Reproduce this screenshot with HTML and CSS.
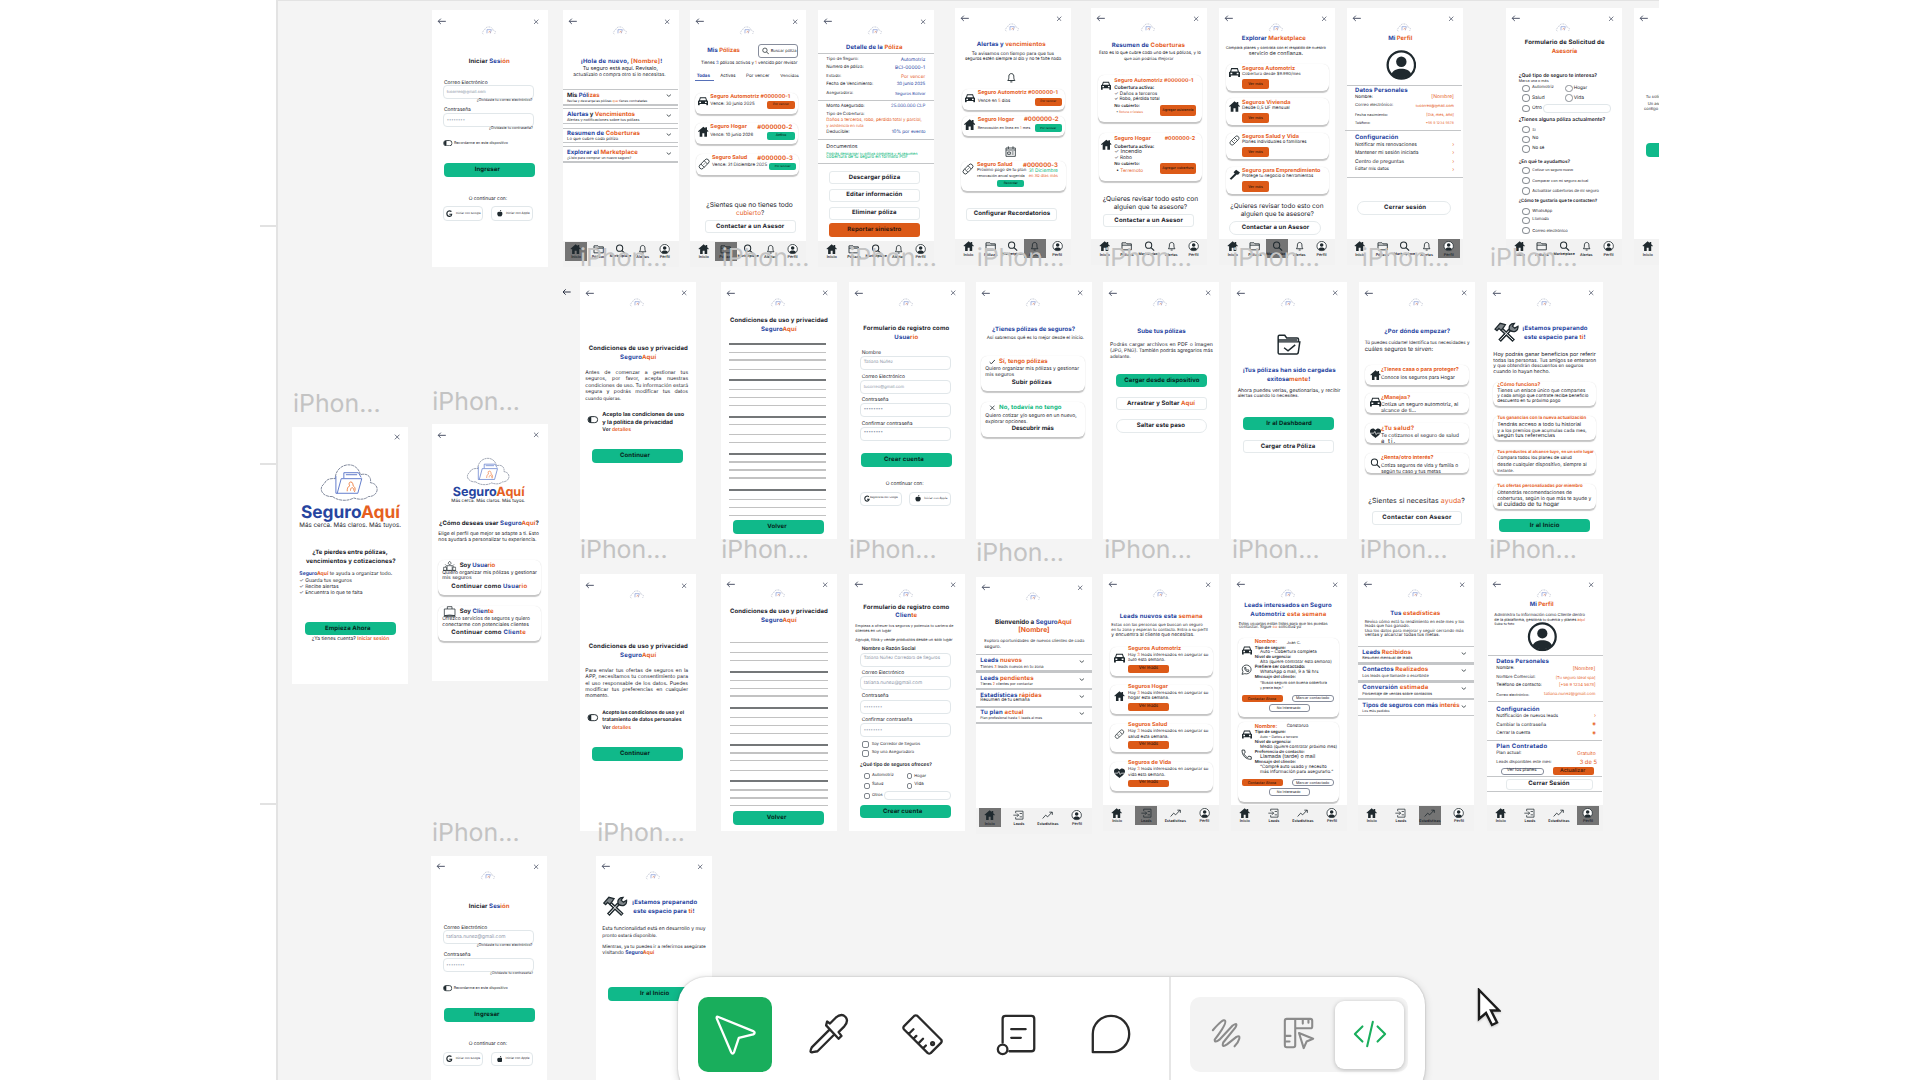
FILE: index.html
```html
<!DOCTYPE html>
<html lang="es">
<head>
<meta charset="utf-8">
<title>SeguroAquí – tablero</title>
<link rel="stylesheet" href="styles.css">
</head>
<body>
<svg class="sprite" aria-hidden="true">
  <symbol id="arrow" viewBox="0 0 27 20"><path d="M26 10H3M11 2 3 10l8 8" fill="none" stroke="currentColor" stroke-width="3"/></symbol>
  <symbol id="close" viewBox="0 0 18 18"><path d="M2 2l14 14M16 2 2 16" fill="none" stroke="currentColor" stroke-width="2.4"/></symbol>
  <symbol id="logo" viewBox="-4 0 184 114"><path d="M40 100C10 102-6 76 16 60c4-12 18-16 32-14C48 0 112-14 124 34c20-6 34 6 30 24 30 4 26 42-6 42-14 12-34 8-44 4-20 12-50 8-64-4Z" fill="none" stroke="#535e78" stroke-width="2.2" stroke-dasharray="9 2"/><path d="M50 38v52h66l12-44H66L54 90M74 44V28h44l8 14M80 34h34" fill="none" stroke="#4a69c4" stroke-width="2.6"/><path d="M84 84c0-16 8-16 8-16s-6-10 2-12 8 12 8 12 10 4 4 18M94 82c0-12 10-12 10 0" fill="none" stroke="#ec7433" stroke-width="2.6"/></symbol>
  <symbol id="mini" viewBox="0 0 48 28"><path d="M6 24C0 21 3 15 9 14 11 5 18 2 23 3c7-1 11 4 11 9 8 0 11 8 5 12" fill="none" stroke="#9aa3ba" stroke-width="1.6" stroke-dasharray="5 3"/><path d="M17 22V11h13l-3 11" fill="none" stroke="#7389cf" stroke-width="1.8"/><path d="M22 20l3-5 2 5" fill="none" stroke="#f0a27c" stroke-width="2"/></symbol>
  <symbol id="car" viewBox="0 0 30 26"><path fill-rule="evenodd" d="M6 1h18l3 9 3 2v13h-5v-4H5v4H0V12l3-2zM8 4 6 10h18l-2-6zM4 14v4h5v-4zm17 0v4h5v-4z" fill="currentColor"/></symbol>
  <symbol id="house" viewBox="0 0 32 32"><path d="M16 1 0 15l2 2 3-2v16h8V21h6v10h8V15l3 2 2-2-5-5V3h-5v3z" fill="currentColor"/></symbol>
  <symbol id="bandage" viewBox="0 0 36 36"><g transform="rotate(-45 18 18)" fill="none" stroke="currentColor" stroke-width="2.4"><rect x="0" y="11" width="36" height="14" rx="7"/><path d="M11 11v14M25 11v14M16 18h4"/></g></symbol>
  <symbol id="hammer" viewBox="0 0 34 32"><path d="M2 29 18 13l-4-4 8-8 12 9-6 7-4-1L7 32z" fill="currentColor"/></symbol>
  <symbol id="heart" viewBox="0 0 32 28"><path d="M16 28C4 20 0 14 0 8 0 0 12-3 16 5 20-3 32 0 32 8c0 6-4 12-16 20z" fill="currentColor"/><path d="M3 14h8l3-5 4 9 3-4h8" fill="none" stroke="#fff" stroke-width="2"/></symbol>
  <symbol id="search" viewBox="0 0 30 30"><circle cx="12" cy="12" r="9" fill="none" stroke="currentColor" stroke-width="3"/><path d="m19 19 9 9" stroke="currentColor" stroke-width="3.4"/></symbol>
  <symbol id="bell" viewBox="0 0 30 32"><path d="M5 24c3-4 3-6 3-12 0-10 14-10 14 0 0 6 0 8 3 12zM12 28h6" fill="none" stroke="currentColor" stroke-width="2.6"/></symbol>
  <symbol id="calendar" viewBox="0 0 34 34"><path d="M3 6h28v25H3zM3 12h28M10 1v8M24 1v8M8 18h8v7H8zM20 18h6M20 24h6" fill="none" stroke="currentColor" stroke-width="2.4"/></symbol>
  <symbol id="policy" viewBox="0 0 34 28"><path d="M3 4h12l3 3h13v18H3zM3 11h28" fill="none" stroke="currentColor" stroke-width="2.6"/></symbol>
  <symbol id="user" viewBox="0 0 92 92"><circle cx="46" cy="46" r="42" fill="#fff" stroke="currentColor" stroke-width="7"/><circle cx="46" cy="36" r="16" fill="currentColor"/><path d="M16 74c6-22 54-22 60 0-16 16-44 16-60 0z" fill="currentColor"/></symbol>
  <symbol id="folder" viewBox="0 0 76 64"><path d="M6 58V8q0-4 4-4h16l6 8h32q4 0 4 4v8M6 24h66l-5 34q-1 3-4 3H10q-4 0-4-4zM6 18h58M24 42l12 9 22-18" fill="none" stroke="currentColor" stroke-width="4.5"/></symbol>
  <symbol id="tools" viewBox="0 0 76 64"><path d="M16 58 48 24M60 58 22 22" stroke="currentColor" stroke-width="11"/><path d="m18 56 28-30M58 56 24 24" stroke="#fff" stroke-width="3"/><path d="M2 22 18 4l16 4-5 8-8 10-7-6-6 7zM48 26c-6-12 2-22 14-22l-6 9 7 6 10-6c2 14-12 22-25 13z" fill="#7d8488" stroke="currentColor" stroke-width="4"/></symbol>
  <symbol id="google" viewBox="0 0 22 24"><path d="M18 5C10-1 2 5 3 13c1 10 15 11 16 1h-8" fill="none" stroke="currentColor" stroke-width="4"/></symbol>
  <symbol id="apple" viewBox="0 0 20 24"><path d="M10 7c10-4 12 6 8 12-3 6-5 4-8 4s-5 2-8-4C-1 13 1 4 10 7zM10 5c0-3 2-5 5-5 0 3-2 5-5 5z" fill="currentColor"/></symbol>
  <symbol id="trend" viewBox="0 0 34 26"><path d="M2 23 11 13l6 5L30 4M22 4h9v8" fill="none" stroke="currentColor" stroke-width="2.4"/></symbol>
  <symbol id="leads" viewBox="0 0 34 30"><path d="M8 9V3h22v24H8v-6M1 15h16M12 10l5 5-5 5M20 10h7M20 20h7" fill="none" stroke="currentColor" stroke-width="2.2"/></symbol>
  <symbol id="whatsapp" viewBox="0 0 34 34"><path d="m3 31 3-8C-2 8 13-2 25 6c12 10 2 27-14 23zM11 11c0 8 5 12 12 12l1-4-4-2-2 2-4-4 1-3-2-3z" fill="none" stroke="currentColor" stroke-width="2.4"/></symbol>
  <symbol id="phone" viewBox="0 0 32 32"><path d="M3 3h7l2 7-4 3c2 5 6 9 11 11l3-4 7 2v7C14 30 2 18 3 3z" fill="none" stroke="currentColor" stroke-width="2.4"/></symbol>
  <symbol id="chevron" viewBox="0 0 18 10"><path d="m2 2 7 6 7-6" fill="none" stroke="currentColor" stroke-width="2.6"/></symbol>
  <symbol id="toggle" viewBox="0 0 34 24"><rect x="2" y="2" width="30" height="19" rx="9" fill="none" stroke="currentColor" stroke-width="3"/><path d="M12 3v17H8Q3 18 3 11t6-8z" fill="currentColor"/></symbol>
  <symbol id="check" viewBox="0 0 20 16"><path d="m2 9 5 5L18 2" fill="none" stroke="currentColor" stroke-width="2.6"/></symbol>
  <symbol id="people" viewBox="0 0 42 34"><path d="M2 32V22h9v10zM31 32V22h9v10zM13 32V17h16v15zM21 3l5 6-5 6-5-6zM7 13l4 4-4 4M35 13l-4 4 4 4M0 32h42" fill="none" stroke="currentColor" stroke-width="2"/></symbol>
  <symbol id="bag" viewBox="0 0 38 34"><path d="M3 9h32v20H3zM12 9V2h14v7M1 32h36M3 29q16-4 32 0" fill="none" stroke="currentColor" stroke-width="2.2"/></symbol>
</svg>

<div class="workspace">
  <aside class="ruler">
    <span class="tick tick-a"></span><span class="tick tick-b"></span><span class="tick tick-c"></span>
  </aside>
  <main class="canvas" id="canvas"></main>
</div>

<nav class="toolbar">
  <div class="tools">
    <button class="tool tool-on" aria-label="Move"><svg viewBox="0 0 48 48"><path d="M6 6 43 21q3 1.500 0 3.500L28 28 23 43q-1.500 3-3 0L5 8Q4.500 5.500 6 6Z"/></svg></button>
    <button class="tool" aria-label="Eyedropper"><svg viewBox="0 0 48 48"><path d="M24 20 6 38q-3 6 1 5l5-1 17-17M21 15l13 14 3-3-3-4 6-6q5-6 1-10t-10 1l-6 6-3-2zM9 38"/></svg></button>
    <button class="tool" aria-label="Measure"><svg viewBox="0 0 48 48"><path d="M15 5 4 16q-1 1.500 0 3l25 25q1.500 1 3 0l11-11q1-1.500 0-3L18 5q-1.500-1-3 0ZM9 24l5-5M14 29l3-3M19 34l5-5M24 39l3-3"/><circle cx="34" cy="34" r="1.500"/></svg></button>
    <button class="tool" aria-label="Annotate"><svg viewBox="0 0 48 48"><path d="M9 33V8q0-3 3-3h27q3 0 3 3v31q0 3-3 3H16M18 19h15M18 28h10"/><circle cx="9" cy="40" r="5"/></svg></button>
    <button class="tool" aria-label="Comment"><svg viewBox="0 0 48 48"><path d="M5 43V24a19 19 0 1 1 19 19Z"/></svg></button>
  </div>
  <div class="modes">
    <div class="segment">
      <button class="mode" aria-label="Draw"><svg viewBox="0 0 36 36"><path d="M3 14Q14 1 16 4T5 24q0 4 5 0L24 9q6-4 3 2L14 27q-2 6 4 2l10-8q4-2 3 2t-5 8"/></svg></button>
      <button class="mode" aria-label="Design"><svg viewBox="0 0 36 36"><path d="M5 2h25q2 0 2 2v6q0 2-2 2H14v18q0 2-2 2H5q-2 0-2-2V4q0-2 2-2ZM14 12V2M22 3v4M28 3v3M4 20h5M4 26h4M18 17l15 6-7 3-3 7z"/></svg></button>
      <button class="mode mode-on" aria-label="Dev"><svg viewBox="0 0 36 36"><path d="M10 10 2 18l8 8M26 10l8 8-8 8M21 5l-6 26"/></svg></button>
    </div>
  </div>
</nav>
<svg class="cursor" viewBox="0 0 24 40"><path d="M2 2v29l7-6 6 12 5-2.500-6-12h8z"/></svg>
<script src="board.js"></script>
</body>
</html>
```
FILE: styles.css
```css
* { box-sizing: border-box; }
body { margin: 0; width: 1920px; height: 1080px; overflow: hidden; position: relative; background: #fff; font-family: Inter, "Liberation Sans", sans-serif; }
.sprite { display: none; }

.workspace { display: flex; height: 1080px; }
.ruler { width: 276px; display: flex; flex-direction: column; align-items: flex-end; }
.tick { width: 16px; height: 2px; background: #e2e2e2; flex: none; }
.tick-a { margin-top: 225px; }
.tick-b { margin-top: 236px; }
.tick-c { margin-top: 338px; }
.canvas { position: relative; width: 1383px; overflow: hidden; background: #f4f4f4; border-left: 2px solid #e3e3e3; border-top: 1px solid #e3e3e3; }

/* Frames on the free canvas */
.screen { position: absolute; width: 116px; height: 257px; background: #fff; color: #1d242c; display: flex; flex-direction: column; }
.screen-nav { background: linear-gradient(#fff 231px, #f2f2f2 231px); }
.frame-name { position: absolute; color: #c3c3c3; }
.stray { position: absolute; width: 9px; height: 8px; color: #2c3344; }
.row { display: flex; align-items: center; height: 6px; flex: none; }
.card { flex: none; display: flex; flex-direction: column; background: #fff; border-radius: 6px; box-shadow: 0 1.500px 1px rgba(0,0,0,.22), 0 0 1px rgba(0,0,0,.12); }
.icon { flex: none; color: #1f292e; }
.icon-soft { color: #4d5468; }
.text { flex: none; white-space: nowrap; line-height: 1; font-size: 10px; text-rendering: geometricPrecision; }
.text b, .box b { color: #27459f; font-weight: inherit; }
.text i, .box i { color: #e6601f; font-style: normal; }
.text u, .box u { color: #10b981; text-decoration: none; }
.strong { font-weight: 700; }
.semi { font-weight: 600; }
.text .strong { font-weight: 700; }
.ghost { color: #8d96a8; }
.rule { flex: none; }
.box { flex: none; display: flex; align-items: center; }
.field { border: 1px solid #e1e7ea; border-radius: 4px; background: #fff; }
.pick { border: 1px solid #7f858c; border-radius: 2px; }
.round { border: 1px solid #8b9096; border-radius: 50%; }
.go { background: #10b98a; border-radius: 4px; font-weight: 700; color: #06261c; }
.warn { background: #dc5a18; border-radius: 3px; font-weight: 700; color: #35190c; }
.tag { border-radius: 2px; font-weight: 500; }
.plain { background: #fff; border: 1px solid #e5eaec; border-radius: 3px; font-weight: 700; }
.pill { border-radius: 7px; }
.outline { background: #fff; border: 1px solid #878d9c; border-radius: 3px; }
.nav { display: flex; flex: none; }
.nav-item { height: 19px; display: flex; flex-direction: column; align-items: center; justify-content: flex-start; padding-top: 2px; gap: 1px; flex: none; }
.nav-on { background: #747474; }

/* Editor toolbar */
.toolbar { position: absolute; left: 678px; top: 977px; width: 747px; height: 120px; display: flex; background: #fff; border-radius: 28px; box-shadow: 0 0 2px rgba(0,0,0,.25), 0 2px 8px rgba(0,0,0,.16); }
.tools { width: 493px; padding: 20px 0 0 20px; display: flex; gap: 20px; border-right: 2px solid #e6e6e6; }
.tool { width: 74px; height: 75px; padding: 0; border: 0; background: none; border-radius: 10px; display: grid; place-items: center; color: #2a2a2a; flex: none; }
.tool svg { width: 46px; height: 46px; margin-top: -2px; fill: none; stroke: currentColor; stroke-width: 2.400; stroke-linejoin: round; stroke-linecap: round; }
.tool-on { background: #19ae5c; color: #fff; }
.modes { padding: 20px 0 0 19px; }
.segment { display: flex; align-items: center; width: 218px; height: 75px; background: #f3f3f3; border-radius: 10px; padding-left: 1px; }
.mode { width: 72px; height: 68px; padding: 0; border: 0; background: none; border-radius: 9px; display: grid; place-items: center; color: #8b8b8b; }
.mode svg { width: 34px; height: 34px; margin-top: -2px; fill: none; stroke: currentColor; stroke-width: 2.200; stroke-linejoin: round; stroke-linecap: round; }
.mode-on { width: 69px; background: #fff; color: #19ae5c; box-shadow: 0 1px 4px rgba(0,0,0,.25); }
.cursor { position: absolute; left: 1477px; top: 988px; width: 24px; height: 40px; fill: #fff; stroke: #1c1c1c; stroke-width: 2.400; filter: drop-shadow(0 1px 1px rgba(0,0,0,.2)); }
```
FILE: board.js
```js
/* Frames are described in thirds of a pixel, relative to the origin of their board section. */
const U = 3;
const CANVAS = [278, 1];
const px = n => (n / U).toFixed(2) + 'px';

/* Items: placed left to right inside a row */
const T = (x, w, html, cls = '', max = 6) => ({ x, w, html: m => `<span class="text ${cls}" data-w="${w / U}" data-max="${max}" style="width:${px(w)};margin-left:${m}">${html}</span>` });
const I = (x, w, h, id, cls = '') => ({ x, w, html: m => `<svg class="icon ${cls}" style="width:${px(w)};height:${px(h)};margin-left:${m}"><use href="#${id}"/></svg>` });
const B = (x, w, h, cls, label, tx = x, tw = 0) => ({ x, w, html: m => {
  const edge = /field|plain|outline/.test(cls) ? U : 0;
  return `<span class="box ${cls}" style="width:${px(w)};height:${px(h)};margin-left:${m}">${label ? T(0, tw, label).html(px(tx - x - edge)) : ''}</span>`;
} });
const L = (x, w, t, color) => ({ x, w, html: m => `<span class="rule" style="width:${px(w)};height:${px(t)};background:${color};margin-left:${m}"></span>` });

/* Blocks: stacked top to bottom inside a frame or a card */
const row = (cy, ...items) => ({ top: cy - 9, h: 18, html: (m, ox) => {
  let cur = ox;
  return `<div class="row" style="margin-top:${m}">${items.map(i => { const s = i.html(px(i.x - cur)); cur = i.x + i.w; return s; }).join('')}</div>`;
} });
const card = (x, y, w, h, ...rows) => ({ top: y, h, html: (m, ox) =>
  `<section class="card" style="width:${px(w)};height:${px(h)};margin:${m} 0 0 ${px(x - ox)}">${stack(rows, x, y)}</section>` });
const stack = (rows, ox, oy) => {
  let cur = oy;
  return rows.flat(Infinity).map(r => { const s = r.html(px(r.top - cur), ox); cur = r.top + r.h; return s; }).join('');
};
const text = (cy, x, w, html, cls, max) => row(cy, T(x, w, html, cls, max));
const lines = (cy, step, x, ...ls) => ls.map(([w, s, c], i) => text(cy + i * step, x, w, s, c));
const rule = (y, x, w, t = 3, c = '#c4c6c8') => row(y, L(x, w, t, c));
const go = (cy, x, label, tx, tw, w = 273) => row(cy, B(x, w, 41, 'go', label, tx, tw));
const plain = (cy, x, label, tx, tw, w = 273, h = 38, c = '') => row(cy, B(x, w, h, 'plain ' + c, label, tx, tw));
const field = (cy, x, label, tw, w = 272) => row(cy, B(x, w, 42, 'field ghost', label, x + 10, tw));
const pair = (cy, x1, w1, a, x2, w2, b) => row(cy, T(x1, w1, a), T(x2, w2, b));

const NAV5 = [['house', 'Inicio', 30], ['policy', 'Pólizas', 40], ['search', 'Marketplace', 64], ['bell', 'Alertas', 38], ['user', 'Perfil', 30]];
const NAV4 = [['house', 'Inicio', 30], ['leads', 'Leads', 32], ['trend', 'Estadísticas', 64], ['user', 'Perfil', 30]];
const nav = (x, y, items, on) => {
  const step = items.length === 5 ? 66.5 : 87.3, lead = items.length === 5 ? 7 : 8;
  return { top: y + 694, h: 57, html: (m, ox) => `<div class="nav" style="margin:${m} 0 0 ${px(x + lead - ox)}">${items.map(([id, s, w], i) =>
    `<div class="nav-item${i === on ? ' nav-on' : ''}" style="width:${px(67)};margin-right:${px(step - 67)}"><svg class="icon" style="width:${px(34)};height:${px(31)}"><use href="#${id}"/></svg>${T(0, w, s, 'semi').html('0')}</div>`).join('')}</div>` };
};

const canvas = document.getElementById('canvas');
let origin = [0, 0];
const place = (x, y) => `left:${(origin[0] + x / U - CANVAS[0]).toFixed(2)}px;top:${(origin[1] + y / U - CANVAS[1]).toFixed(2)}px`;
const screen = (x, y, o, ...rows) => {
  const up = o.high ? 2 : 0;
  const head = [];
  if (!o.noBack) head.push(row(y + 33 - up, I(x + 15, 28, 20, 'arrow', 'icon-soft'), I(x + 304, 19, 17, 'close', 'icon-soft')));
  else head.push(row(y + 29, I(x + 304, 19, 18, 'close', 'icon-soft')));
  if (!o.noLogo) head.push(row(y + 61 - up, I(x + 147, 50, 28, 'mini')));
  const foot = o.nav ? [nav(x, y, o.nav, o.on)] : [];
  canvas.insertAdjacentHTML('beforeend', `<article class="screen${o.nav ? ' screen-nav' : ''}" style="${place(x, y)}">${stack([...head, ...rows, ...foot], x, y)}</article>`);
};
const name = (x, base) => canvas.insertAdjacentHTML('beforeend', `<span class="text frame-name" data-w="87.7" data-max="30" style="${place(x, base - 64)}">iPhon...</span>`);

/* Section: upper left */
origin = [250, 0];
screen(545, 31, {},
  text(186, 656, 124, 'Iniciar <b>Ses</b><i>ión</i>', 'strong'),
  text(249, 582, 131, 'Correo Electrónico'), field(277, 580, 'tucorreo@gmail.com', 118),
  text(303, 680, 168, '¿Olvidaste tu correo electrónico?'),
  text(332, 582, 81, 'Contraseña'), field(361, 580, '••••••••', 55),
  text(386, 717, 132, '¿Olvidaste tu contraseña?'),
  row(429, I(579, 29, 20, 'toggle'), T(612, 162, 'Recordarme en este dispositivo')),
  go(511, 582, 'Ingresar', 674, 76),
  text(598, 656, 116, 'O continuar con:'),
  row(641, B(580, 120, 43, 'field', ''), B(724, 124, 43, 'field', '')),
  row(641, I(589, 20, 22, 'google'), T(618, 74, 'Iniciar con Google'), I(741, 17, 20, 'apple'), T(768, 72, 'Iniciar con Apple')));
const fold = (x, y, top, bottom, title, tw, sub, sw, w = 347) => [
  rule(top, x, w, 4), text(y, x + 13, tw, title, 'strong'), row(y + 1, I(x + 310, 17, 9, 'chevron')),
  text(y + 17, x + 13, sw, sub), rule(bottom, x, w, 4)];
screen(938, 31, { nav: NAV5, on: 0 },
  text(186, 992, 245, '<b>¡Hola de nuevo,</b> <i>[Nombre]</i><b>!</b>', 'strong'),
  text(209, 998, 227, 'Tu seguro está aquí. Revísalo,'), text(227, 970, 278, 'actualízalo o compra otro si lo necesitas.'),
  fold(938, 287, 268, 315, 'Mis <b>Pól</b><i>izas</i>', 98, 'Revisa y descarga las pólizas <i>que</i> tienes contratadas', 242),
  fold(938, 344, 326, 371, '<b>Alertas</b> y <i>Vencimientos</i>', 204, 'Alertas y notificaciones sobre tus pólizas', 218),
  fold(938, 402, 385, 427, '<b>Resumen de</b> <i>Coberturas</i>', 219, 'Lo que cubre cada póliza', 154),
  fold(938, 458, 440, 486, '<b>Explorar el</b> <i>Marketplace</i>', 213, '¿Listo para comprar un nuevo seguro?', 193));

/* Section: policies */
origin = [680, 0];
const tag = (x, w, kind, label, tw, h = 22) => B(x, w, h, kind + ' tag', label, x + (w - tw) / 2, tw);
screen(31, 31, { nav: NAV5, on: 1 },
  row(153, T(82, 98, '<b>Mis</b> <i>Pólizas</i>', 'strong'), B(233, 122, 43, 'outline', '')),
  row(153, I(246, 22, 24, 'search'), T(272, 78, 'Buscar póliza')),
  text(194, 63, 290, 'Tienes <b>3</b> pólizas activas y <i>1</i> vencida por revisar'),
  row(231, T(50, 40, '<b>Todas</b>', 'strong'), T(121, 46, 'Activas'), T(198, 71, 'Por vencer'), T(301, 56, 'Vencidas')),
  rule(243, 45, 56, 3, '#5670b8'),
  card(46, 278, 309, 63, text(292, 91, 240, '<i>Seguro Automotriz #000000-1</i>', 'strong'), row(304, I(54, 30, 26, 'car')), row(315, T(91, 133, 'Vence: 30 junio 2025'), tag(262, 82, 'warn', 'Por vencer', 48))),
  card(46, 370, 309, 62, row(384, T(91, 110, '<i>Seguro Hogar</i>', 'strong'), T(232, 105, '<i>#000000-2</i>', 'strong')), row(396, I(54, 32, 34, 'house')), row(408, T(91, 129, 'Vence: 10 junio 2026'), tag(262, 82, 'go', 'Activa', 32))),
  card(49, 463, 309, 62, row(477, T(96, 106, '<i>Seguro Salud</i>', 'strong'), T(232, 107, '<i>#000000-3</i>', 'strong')), row(492, I(54, 37, 36, 'bandage')), row(499, T(96, 166, 'Vence: 31 Diciembre 2025'), tag(268, 80, 'go', 'Por renovar', 48))),
  text(615, 79, 260, '¿Sientes que no tienes todo', '', 8), text(639, 168, 85, '<i>cubierto</i>?', '', 8),
  plain(680, 74, 'Contactar a un Asesor', 108, 205));
screen(415, 31, { nav: NAV5, on: -1 },
  text(145, 498, 170, '<b>Detalle de la</b> <i>Póliza</i>', 'strong'), rule(160, 415, 347),
  pair(180, 439, 97, 'Tipo de Seguro:', 662, 74, '<b>Automotriz</b>'), pair(206, 439, 112, 'Número de póliza:', 645, 90, '<b>BCI-00000-1</b>'),
  pair(231, 439, 45, 'Estado:', 663, 73, '<i>Por vencer</i>'), pair(257, 439, 141, 'Fecha de Vencimiento:', 650, 86, '<b>30 junio 2025</b>'),
  pair(283, 439, 81, 'Aseguradora:', 645, 92, '<b>Seguros Bolívar</b>'), rule(302, 415, 347),
  pair(321, 439, 115, 'Monto Asegurado:', 633, 103, '<b>25.000.000 CLP</b>'), text(346, 439, 115, 'Tipo de Cobertura:'),
  text(364, 439, 288, '<i>Daños a terceros, robo, pérdida total y parcial,</i>'), text(379, 439, 112, '<i>y asistencia en ruta</i>'),
  pair(401, 439, 70, 'Deducible:', 635, 102, '<b>10% por evento</b>'), rule(420, 415, 347),
  text(443, 439, 94, 'Documentos'), text(461, 439, 275, '<u>Podrás descargar tu póliza completa y el resumen</u>'), text(476, 439, 245, '<u>cobertura de tu seguro en formato PDF</u>'), rule(492, 415, 347),
  plain(533, 446, 'Descargar póliza', 506, 155), plain(586, 446, 'Editar información', 499, 168), plain(640, 446, 'Eliminar póliza', 516, 134),
  row(690, B(446, 273, 40, 'warn', 'Reportar siniestro', 502, 162)));
screen(825, 24, { nav: NAV5, on: 3, high: 1 },
  text(136, 890, 207, '<b>Alertas y</b> <i>vencimientos</i>', 'strong'), text(163, 875, 248, 'Te avisamos con tiempo para que tus'), text(181, 855, 290, 'seguros estén siempre al día y no te falte nada'),
  row(233, I(979, 32, 34, 'bell')),
  card(845, 268, 309, 62, text(282, 893, 241, '<i>Seguro Automotriz #000000-1</i>', 'strong'), row(295, I(856, 30, 26, 'car')), row(306, T(893, 98, 'Vence en <i>5</i> días'), tag(1064, 82, 'warn', 'Por vencer', 48))),
  card(845, 347, 309, 60, row(361, T(893, 110, '<i>Seguro Hogar</i>', 'strong'), T(1032, 104, '<i>#000000-2</i>', 'strong')), row(373, I(853, 34, 34, 'house')), row(384, T(893, 158, 'Renovación en línea en <i>1</i> mes'), tag(1064, 82, 'go', 'Por renovar', 48))),
  row(456, I(974, 34, 34, 'calendar')),
  card(843, 484, 315, 88, row(497, T(891, 107, '<i>Seguro Salud</i>', 'strong'), T(1029, 105, '<i>#000000-3</i>', 'strong')), row(506, I(847, 36, 36, 'bandage')), row(515, T(891, 148, 'Próximo pago de tu plan'), T(1046, 88, '<u>31 Diciembre</u>')), row(527, T(891, 144, 'renovación anual sugerida'), T(1046, 88, '<i>en 30 días más</i>')), row(550, tag(952, 81, 'go', 'Recordar', 42))),
  plain(643, 858, 'Configurar Recordatorios', 881, 230));

/* Section: coverage and marketplace */
origin = [1050, 0];
screen(124, 24, { nav: NAV5, on: -1, high: 1 },
  text(137, 185, 220, '<b>Resumen de</b> <i>Coberturas</i>', 'strong'), text(163, 147, 306, 'Esto es lo que cubre cada uno de tus pólizas, y lo'), text(181, 222, 149, 'que aún podrías mejorar'),
  card(144, 224, 312, 142, text(245, 193, 238, '<i>Seguro Automotriz #000000-1</i>', 'strong'), row(256, I(153, 30, 28, 'car')), lines(266, 17, 193, [120, 'Cobertura activa:', 'semi'], [129, '✓ Daños a terceros'], [136, '✓ Robo, pérdida total']), row(322, T(193, 77, 'No cubierto:', 'semi')), row(331, B(329, 110, 33, 'warn tag', 'Agregar asistencia', 337, 94)), row(338, T(199, 80, '• <i>Rotura cristales</i>'))),
  card(146, 400, 310, 142, row(420, T(193, 110, '<i>Seguro Hogar</i>', 'strong'), T(344, 92, '<i>#000000-2</i>', 'strong')), row(433, I(153, 32, 34, 'house')), lines(441, 17, 193, [120, 'Cobertura activa:', 'semi'], [83, '✓ Incendio'], [53, '✓ Robo']), row(497, T(193, 77, 'No cubierto:', 'semi')), row(506, B(329, 110, 33, 'warn tag', 'Agregar cobertura', 337, 94)), row(514, T(199, 80, '• <i>Terremoto</i>'))),
  text(598, 158, 287, '¿Quieres revisar todo esto con', '', 8), text(622, 191, 221, 'alguien que te asesore?', '', 8), plain(662, 160, 'Contactar a un Asesor', 193, 206));
const offer = (y, icon, title, tw, sub, sw, label, dy = 17) => card(528, y, 309, 80, text(y + dy, 576, tw, '<i>' + title + '</i>', 'strong'), row(y + dy + 9, I(536, 33, 33, icon)), text(y + dy + 17, 576, sw, sub), row(y + dy + 44, tag(575, 83, 'warn', label, 44, 31)));
screen(508, 24, { nav: NAV5, on: 2, high: 1 },
  text(118, 575, 193, '<b>Explorar</b> <i>Marketplace</i>', 'strong'), text(145, 527, 302, 'Compara planes y contrata con el respaldo de nuestro'), text(163, 596, 163, 'servicio de confianza.'),
  offer(192, 'car', 'Seguros Automotriz', 160, 'Cobertura desde $9.990/mes', 177, 'Ver más'), offer(295, 'house', 'Seguros Vivienda', 146, 'Desde 0,5 UF mensual', 143, 'Ver más', 16),
  offer(398, 'bandage', 'Seguros Salud y Vida', 171, 'Planes individuales o familiares', 194, 'Ver más', 15), offer(501, 'hammer', 'Seguro para Emprendimiento', 236, 'Protege tu negocio o herramientas', 214, 'Ver más', 15),
  text(619, 541, 280, '¿Quieres revisar todo esto con', '', 8), text(643, 572, 220, 'alguien que te asesore?', '', 8), plain(684, 538, 'Contactar a un Asesor', 575, 203, 276, 42, 'pill'));

/* Section: profile and request form */
origin = [1340, 0];
const option = (cy, x, w, s) => row(cy, B(x, 24, 22, 'round', ''), T(x + 30, w, s));
screen(20, 24, { nav: NAV5, on: 4, high: 1 },
  text(118, 145, 72, '<b>Mi</b> <i>Perfil</i>', 'strong'), row(195, I(137, 92, 90, 'user')), rule(256, 20, 347),
  text(272, 45, 158, '<b>Datos Personales</b>', 'strong'),
  pair(294, 45, 54, 'Nombre:', 274, 68, '<i>[Nombre]</i>'), pair(319, 45, 115, 'Correo electrónico:', 227, 115, '<i>tucorreo@gmail.com</i>'), pair(345, 45, 99, 'Fecha nacimiento:', 259, 83, '<i>[Día, mes, año]</i>'), pair(370, 45, 46, 'Teléfono:', 257, 85, '<i>+56 9 1234 5678</i>'), rule(391, 16, 347),
  text(414, 45, 130, '<b>Configuración</b>', 'strong'),
  [['Notificar mis renovaciones', 186, 436], ['Mantener mi sesión iniciada', 191, 461], ['Centro de preguntas', 148, 487], ['Editar mis datos', 102, 512]].map(([s, w, y]) => row(y, T(45, w, s), T(337, 6, '<i>›</i>'))), rule(533, 22, 347),
  plain(625, 50, 'Cerrar sesión', 132, 127, 282, 42, 'pill'));
screen(499, 24, { nav: NAV5, on: -1, high: 1 },
  text(128, 554, 240, 'Formulario de Solicitud de', 'strong'), text(155, 635, 77, '<i>Asesoría</i>', 'strong'),
  text(229, 536, 236, '¿Qué tipo de seguro te interesa?', 'semi'), text(244, 536, 90, 'Marca una o más'),
  row(265, B(547, 24, 22, 'round', ''), T(576, 66, 'Automotriz'), B(676, 22, 22, 'round', ''), T(701, 41, 'Hogar')), row(294, B(547, 24, 22, 'round', ''), T(576, 38, 'Salud'), B(676, 22, 22, 'round', ''), T(701, 31, 'Vida')),
  row(325, B(547, 24, 22, 'round', ''), T(576, 30, 'Otro'), B(609, 203, 26, 'field', '')), text(363, 536, 260, '¿Tienes alguna póliza actualmente?', 'semi'),
  option(389, 547, 10, 'Sí'), option(418, 547, 18, 'No'), option(447, 547, 36, 'No sé'), text(487, 536, 155, '¿En qué te ayudamos?', 'semi'),
  option(512, 547, 123, 'Cotizar un seguro nuevo'), option(542, 547, 168, 'Comparar con mi seguro actual'), option(573, 547, 200, 'Actualizar coberturas de mi seguro'), text(607, 536, 236, '¿Cómo te gustaría que te contacten?', 'semi'),
  option(634, 547, 60, 'WhatsApp'), option(662, 547, 50, 'Llamada'), option(692, 547, 106, 'Correo electrónico'));
screen(883, 24, { nav: NAV5, on: -1, high: 1 }, text(294, 917, 200, 'Tu solicitud fue enviada con éxito'), text(311, 923, 190, 'Un asesor se pondrá en contacto'), text(328, 912, 210, 'contigo dentro de las próximas horas'), go(450, 917, 'Volver al inicio', 1000, 120));
[580, 721.7, 849.3, 976.7, 1104.3, 1232.3, 1361.7, 1490].forEach(x => { origin = [x, 0]; name(0, 800); });

/* Section: onboarding */
origin = [250, 380];
name(129, 97); name(547, 90);
screen(127, 141, { noBack: 1, noLogo: 1 },
  row(306, I(205, 183, 116, 'logo')), text(397, 153, 297, '<b>Seguro</b><i>Aquí</i>', 'strong', 30), text(436, 148, 306, 'Más cerca. Más claros. Más tuyos.', '', 8),
  text(520, 187, 226, '¿Te pierdes entre pólizas,', 'strong'), text(547, 168, 269, 'vencimientos y cotizaciones?', 'strong'),
  text(585, 148, 279, '<b class="strong">Seguro</b><i class="strong">Aquí</i> te ayuda a organizar todo.'), text(604, 148, 158, '✓ Guarda tus seguros'), text(622, 148, 118, '✓ Recibe alertas'), text(641, 148, 190, '✓ Encuentra lo que te falta'),
  go(746, 165, 'Empieza Ahora', 225, 137), text(779, 185, 233, '¿Ya tienes cuenta? <i class="semi">Iniciar sesión</i>'));
const role = (y, h, icon, name, w, l1, w1, l2, w2, cw) => card(565, y, 309, h, row(y + 17, I(580, 40, 34, icon), T(629, w, 'Soy ' + name, 'strong')), text(y + 40, 577, w1, l1), text(y + 57, 577, w2, l2), text(y + 81, 604, cw, 'Continuar como ' + name, 'strong'));
screen(545, 132, { noLogo: 1 },
  row(275, I(646, 136, 86, 'logo')), text(339, 608, 216, '<b>Seguro</b><i>Aquí</i>', 'strong', 30), text(368, 604, 222, 'Más cerca. Más claros. Más tuyos.'),
  text(431, 567, 300, '¿Cómo deseas usar <b>Seguro</b><i>Aquí</i>?', 'strong'), text(463, 565, 302, 'Elige el perfil que mejor se adapte a ti. Esto'), text(482, 565, 295, 'nos ayudará a personalizar tu experiencia.'),
  role(540, 106, 'people', '<b>Usua</b><i>rio</i>', 107, 'Quiero organizar mis pólizas y gestionar', 284, 'mis seguros', 88, 228),
  role(679, 105, 'bag', '<b>Clien</b><i>te</i>', 102, 'Ofrezco servicios de seguros y quiero', 264, 'conectarme con potenciales clientes', 260, 224));

/* Section: sign-up */
origin = [560, 270];
canvas.insertAdjacentHTML('beforeend', `<svg class="stray" style="${place(7, 54)}"><use href="#arrow"/></svg>`);
const terms = (y, ls, a, aw, b, bw, ty) => [
  text(y, 86, 298, 'Condiciones de uso y privacidad', 'strong'), text(y + 27, 180, 109, '<b>Seguro</b><i>Aquí</i>', 'strong'),
  ls.map(([w, s], i) => text(y + 73 + i * 19, 76, w, s, 'wide', 5.2)),
  row(ty + 14, I(82, 35, 23, 'toggle')), text(ty, 127, aw, a, 'strong'), text(ty + 23, 127, bw, b, 'strong'), text(ty + 47, 127, 86, 'Ver <i>detalles</i>', 'semi'), go(ty + 123, 95, 'Continuar', 180, 90)];
screen(60, 36, {}, terms(238, [[309, 'Antes de comenzar a gestionar tus'], [309, 'seguros, por favor, acepta nuestras'], [309, 'condiciones de uso. Tu información estará'], [309, 'segura y podrás modificar tus datos'], [108, 'cuando quieras.']], 'Acepto las condiciones de uso', 246, 'y la política de privacidad', 212, 436));
const doc = (ys, bold, x, w) => ys.map(y => rule(y, x, w, bold.includes(y) ? 6 : 4, bold.includes(y) ? '#747779' : '#c2c2c2'));
screen(482, 36, {}, text(153, 510, 294, 'Condiciones de uso y privacidad', 'strong'), text(180, 603, 107, '<b>Seguro</b><i>Aquí</i>', 'strong'),
  doc([223, 247, 270, 299, 330, 358, 382, 406, 441, 464, 494, 517, 552, 576, 600, 624, 659, 688, 712, 736], [223, 330, 441, 552, 659], 508, 290), go(771, 519, 'Volver', 622, 58));
screen(866, 36, {}, text(176, 910, 258, 'Formulario de registro como', 'strong'), text(203, 1003, 72, '<b>Usua</b><i>rio</i>', 'strong'),
  text(251, 905, 58, 'Nombre'), field(280, 901, 'Tatiana Núñez', 88), text(322, 905, 130, 'Correo Electrónico'), field(350, 901, 'tucorreo@gmail.com', 122), text(393, 905, 81, 'Contraseña'), field(420, 901, '••••••••', 58), text(463, 905, 153, 'Confirmar contraseña'), field(491, 901, '••••••••', 58),
  go(570, 903, 'Crear cuenta', 972, 120), text(642, 977, 114, 'O continuar con:'), row(686, B(901, 124, 42, 'field', ''), B(1048, 124, 42, 'field', '')), row(686, I(911, 18, 22, 'google'), T(930, 84, 'Registrarse con Google'), I(1064, 18, 20, 'apple'), T(1093, 70, 'Iniciar con Apple')));
name(60, 866); name(484, 866); name(867, 866);

origin = [970, 270];
const choice = (y, icon, title, tw, ls, cta, cw) => card(33, y, 311, 105, row(y + 18, I(56, 20, 17, icon), T(87, tw, title, 'strong')), text(y + 43, 46, ls[1], ls[0]), text(y + 61, 46, ls[3], ls[2]), text(y + 82, 125, cw, cta, 'strong'));
screen(18, 36, {}, text(180, 66, 249, '<b>¿Tienes pólizas de seguros?</b>', 'strong'), text(209, 50, 293, 'Así sabremos qué es lo mejor desde el inicio.'),
  choice(257, 'check', '<i>Sí, tengo pólizas</i>', 146, ['Quiero organizar mis pólizas y gestionar', 282, 'mis seguros', 87], 'Subir pólizas', 120), choice(396, 'close', '<u>No, todavía no tengo</u>', 188, ['Quiero cotizar y/o seguro en un nuevo,', 274, 'explorar opciones.', 127], 'Descubrir más', 127));
screen(400, 36, {}, text(187, 502, 145, '<b>Sube tus pólizas</b>', 'strong'), [['Podrás cargar archivos en PDF o imagen', 309], ['(JPG, PNG). También podrás agregarlos más', 309], ['adelante.', 62]].map(([s, w], i) => text(226 + i * 18, 420, w, s, 'wide', 5.2)),
  go(332, 438, 'Cargar desde dispositivo', 463, 226), plain(401, 437, 'Arrastrar y Soltar&nbsp;<i>Aquí</i>', 471, 204), plain(468, 438, 'Saltar este paso', 500, 145, 273, 40, 'pill'));
screen(783, 36, {}, row(225, I(917, 76, 63, 'folder')), text(303, 818, 279, '<b>¡Tus pólizas han sido cargadas</b>', 'strong'), text(329, 891, 130, '<b>exitosa</b><i>mente</i><b>!</b>', 'strong'), text(364, 803, 308, 'Ahora puedes verlas, gestionarlas, y recibir', 'wide', 5), text(381, 803, 184, 'alertas cuando lo necesites.'),
  go(461, 820, 'Ir al Dashboard', 889, 137), plain(530, 820, 'Cargar otra Póliza', 872, 164));
name(19, 873); name(403, 866); name(786, 866);

origin = [1330, 270];
const need = (y, icon, title, tw, ...ls) => card(105, y, 311, 61, text(y + 17, 153, tw, '<i>' + title + '</i>', 'strong'), row(y + 30, I(119, 33, 31, icon)), ls.map(([w, s], i) => text(y + 40 + i * 17, 153, w, s)));
screen(88, 36, {}, text(187, 163, 198, '<b>¿Por dónde empezar?</b>', 'strong'), text(224, 104, 316, 'Tú puedes cuidarte! Identifica tus necesidades y'), text(241, 104, 206, 'cuáles seguros te sirven:'),
  need(284, 'house', '¿Tienes casa o para proteger?', 234, [222, 'Conoce los seguros para Hogar']), need(368, 'car', '¿Manejas?', 88, [232, 'Cotiza un seguro automotriz, al'], [105, 'alcance de ti...']), need(459, 'heart', '¿Tu salud?', 100, [234, 'Te cotizamos el seguro de salud'], [46, 'a ti.']), need(549, 'search', '¿Renta/otro interés?', 158, [232, 'Cotiza seguros de vida y familia o'], [180, 'según tu caso y tus metas']),
  text(692, 115, 290, '¿Sientes si necesitas <i>ayuda</i>?', '', 7), plain(745, 127, 'Contactar con Asesor', 157, 208, 268, 42));
const soon = (y, title, tw, ...ls) => card(488, y, 311, 73, text(y + 10, 502, tw, '<i>' + title + '</i>', 'strong'), ls.map(([w, s], i) => text(y + 28 + i * 17, 502, w, s)));
screen(471, 36, {}, row(188, I(492, 76, 62, 'tools')), text(177, 577, 196, '<b>¡Estamos preparando</b>', 'strong'), text(203, 582, 185, '<b>este espacio para</b> <i>ti</i><b>!</b>', 'strong'),
  lines(256, 17, 490, [308, 'Hoy podrás ganar beneficios por referir'], [310, 'todas las personas. Tus amigos se enteraron'], [270, 'y que obtendrán descuentos en seguros'], [170, 'cuando lo hayan hecho.']),
  soon(336, '¿Cómo funciona?', 129, [264, 'Tienes un enlace único que compartes'], [274, 'y cada amigo que contrate recibe beneficio'], [190, 'descuento en tu próximo pago']), soon(438, 'Tus ganancias con la nueva actualización', 268, [252, 'Tendrás acceso a todo tu historial'], [268, 'y a los premios que acumulas cada mes,'], [174, 'según tus referencias']), soon(540, 'Tus productos al alcance tuyo, en un solo lugar', 290, [224, 'Compara todos los planes de salud'], [268, 'desde cualquier dispositivo, siempre al'], [50, 'instante.']), soon(643, 'Tus ofertas personalizadas por miembro', 256, [224, 'Obtendrás recomendaciones de'], [282, 'coberturas, según lo que más te ayude y'], [186, 'al cuidado de tu hogar']),
  go(767, 506, 'Ir al Inicio', 599, 90, 275));
name(90, 866); name(478, 866);

/* Section: client sign-up */
origin = [560, 565];
screen(60, 28, {}, terms(247, [[309, 'Para enviar tus ofertas de seguros en la'], [309, 'APP, necesitamos tu consentimiento para'], [309, 'el uso responsable de los datos. Puedes'], [309, 'modificar tus preferencias en cualquier'], [70, 'momento.']], 'Acepto las condiciones de uso y el', 246, 'tratamiento de datos personales', 238, 445));
screen(482, 28, { high: 1 }, text(141, 510, 294, 'Condiciones de uso y privacidad', 'strong'), text(168, 603, 107, '<b>Seguro</b><i>Aquí</i>', 'strong'),
  doc([233, 263, 287, 322, 346, 370, 393, 428, 458, 481, 505, 540, 564, 587, 617, 648, 675, 699, 722], [322, 428, 540, 648], 510, 293), go(759, 519, 'Volver', 620, 60));
screen(866, 28, { high: 1 }, text(128, 910, 258, 'Formulario de registro como', 'strong'), text(154, 1006, 66, '<b>Clien</b><i>te</i>', 'strong'),
  text(184, 886, 295, 'Empieza a ofrecer tus seguros y potencia tu cartera de'), text(198, 886, 108, 'clientes en un lugar'), text(226, 886, 292, 'Agrupa, filtra y vende productos desde un solo lugar'),
  text(254, 905, 162, 'Nombre o Razón Social', 'semi'), field(284, 901, 'Tatiana Núñez Corredora de Seguros', 230), text(325, 905, 128, 'Correo Electrónico'), field(354, 901, 'tatiana.nunez@gmail.com', 176), text(396, 905, 81, 'Contraseña'), field(425, 901, '••••••••', 56), text(466, 905, 152, 'Confirmar contraseña'), field(496, 901, '••••••••', 56),
  row(538, B(907, 20, 20, 'pick', ''), T(935, 146, 'Soy Corredor de Seguros')), row(566, B(907, 20, 20, 'pick', ''), T(935, 128, 'Soy una Aseguradora')), text(602, 900, 216, '¿Qué tipo de seguros ofreces?', 'semi'),
  row(633, B(912, 18, 18, 'pick', ''), T(936, 66, 'Automotriz'), B(1041, 16, 18, 'pick', ''), T(1063, 35, 'Hogar')), row(662, B(912, 18, 18, 'pick', ''), T(936, 34, 'Salud'), B(1041, 16, 18, 'pick', ''), T(1063, 28, 'Vida')), row(692, B(912, 18, 18, 'pick', ''), T(936, 32, 'Otros'), B(972, 201, 26, 'field', '')),
  go(740, 899, 'Crear cuenta', 969, 118));
name(112, 830);
origin = [432, 565]; name(0, 830);

/* Section: client dashboard */
origin = [970, 565];
screen(18, 36, { nav: NAV4, on: 0, high: 1 }, text(171, 75, 230, 'Bienvenido a <b>Seguro</b><i>Aquí</i>', 'strong', 7), text(197, 145, 94, '<i>[Nombre]</i>', 'strong', 7), text(232, 43, 300, 'Explora oportunidades de nuevos clientes de cada'), text(247, 43, 50, 'seguro.'),
  fold(18, 289, 269, 317, '<b>Leads</b> <i>nuevos</i>', 125, 'Tienes <i>3</i> leads nuevos en tu zona', 190), fold(18, 342, 321, 370, '<b>Leads</b> <i>pendientes</i>', 160, 'Tienes <i>2</i> clientes por contactar', 158), fold(18, 393, 374, 424, '<b>Estadísticas</b> <i>rápidas</i>', 184, 'Resumen de tu semana', 148), fold(18, 443, 428, 474, '<b>Tu plan</b> <i>actual</i>', 130, 'Plan profesional hasta <i>5</i> leads al mes', 186));
const lead = (y, icon, title, tw, l2, w2, cta = 'Ver leads') => card(419, y, 309, 86, text(y + 6, 474, tw, '<i>' + title + '</i>', 'strong'), text(y + 26, 474, 242, 'Hay <i>3</i> leads interesados en asegurar su'), row(y + 33, I(431, 33, 31, icon)), text(y + 43, 474, w2, l2), row(y + 65, tag(473, 125, 'warn', cta, 58, 23)));
screen(400, 28, { nav: NAV4, on: 1, high: 1 }, text(155, 449, 249, '<b>Leads nuevos esta</b> <i>semana</i>', 'strong'), lines(182, 14, 424, [275, 'Estas son las personas que buscan un seguro'], [290, 'en tu zona y esperan tu contacto. Entra a su perfil'], [250, 'y encuentra al cliente que necesitas.']),
  lead(247, 'car', 'Seguros Automotriz', 160, 'auto esta semana.', 112), lead(361, 'house', 'Seguros Hogar', 120, 'hogar esta semana.', 124), lead(476, 'bandage', 'Seguros Salud', 118, 'salud esta semana.', 122), lead(591, 'heart', 'Seguros de Vida', 130, 'vida esta semana.', 112));
const contact = (y, h, mid, who, rows, by) => card(803, y, 305, h, row(y + 15, T(854, 68, '<i>Nombre:</i>', 'strong'), T(950, who[1], who[0])), row(y + 38, I(817, 30, 27, 'car')), rows.slice(0, 4).map(([w, s, c], i) => text(y + 30 + i * 15.5, c ? 854 : 870, w, s, c)), row(y + 97, I(812, 34, 34, mid)), rows.slice(4).map(([w, s, c], i) => text(y + 92 + i * 15, c ? 854 : 870, w, s, c)),
  row(by, B(815, 124, 22, 'warn tag', 'Contactar Ahora', 833, 86), B(967, 124, 22, 'outline', 'Marcar contactado', 978, 100)), row(by + 29, B(896, 124, 23, 'outline', 'No interesado', 920, 72)));
screen(783, 28, { nav: NAV4, on: -1, high: 1 }, text(122, 823, 262, '<b>Leads interesados en Seguro</b>', 'strong'), text(149, 841, 228, '<b>Automotriz</b> <i>esta semana</i>', 'strong'), text(176, 806, 268, 'Estos usuarios están listos para que los puedas'), text(190, 806, 188, 'contactar. Sigue <i>su</i> solicitud ya'),
  contact(218, 238, 'whatsapp', ['Juan C.', 42], [[94, 'Tipo de seguro:', 'semi'], [170, 'Auto – Cobertura completa'], [110, 'Nivel de urgencia:', 'semi'], [216, 'Alta (quiere contratar esta semana)'], [152, 'Prefiere ser contactado:', 'semi'], [176, 'WhatsApp o mail, 9 a 18 hrs'], [124, 'Mensaje del cliente:', 'semi'], [202, '“Busco seguro con buena cobertura'], [70, 'y precio bajo.”']], 400),
  contact(472, 238, 'phone', ['Constanza', 66], [[94, 'Tipo de seguro:', 'semi'], [114, 'Auto – Daños a tercero'], [110, 'Nivel de urgencia:', 'semi'], [232, 'Media (quiere contratar próximo mes)'], [150, 'Preferencia de contacto:', 'semi'], [166, 'Llamada (tarde) o mail'], [124, 'Mensaje del cliente:', 'semi'], [200, '“Compré auto usado y necesito'], [220, 'más información para asegurarlo.”']], 653));

origin = [1330, 565];
screen(84, 28, { nav: NAV4, on: 2, high: 1 }, text(147, 181, 150, '<b>Tus</b> <i>estadísticas</i>', 'strong'), lines(173, 14, 104, [300, 'Revisa cómo está tu rendimiento en este mes y los'], [136, 'leads que has ganado.'], [298, 'Usa los datos para mejorar y seguir cerrando más'], [226, 'ventas y alcanzar todas tus metas.']),
  fold(84, 263, 245, 294, '<b>Leads</b> <i>Recibidos</i>', 146, 'Resumen mensual de leads', 150), fold(84, 315, 298, 347, '<b>Contactos</b> <i>Realizados</i>', 198, 'Los leads que llamaste o escribiste', 200), fold(84, 369, 351, 400, '<b>Conversión</b> <i>estimada</i>', 198, 'Porcentaje de ventas sobre contactos', 210), fold(84, 424, 404, 452, '<b>Tipos de seguros con más</b> <i>interés</i>', 292, 'Los más pedidos', 82));
screen(471, 28, { nav: NAV4, on: 3, high: 1 }, text(120, 599, 72, '<b>Mi</b> <i>Perfil</i>', 'strong'), lines(150, 14, 493, [273, 'Administra tu información como Cliente dentro'], [273, 'de la plataforma, gestiona tu cuenta y planes <i>aquí</i>'], [60, 'Sube tu foto']), row(216, I(591, 92, 88, 'user')), rule(273, 473, 347),
  text(292, 499, 158, '<b>Datos Personales</b>', 'strong'), pair(314, 499, 54, 'Nombre:', 728, 68, '<i>[Nombre]</i>'), pair(339, 499, 118, 'Nombre Comercial:', 677, 120, '<i>[Tu seguro ideal spa]</i>'), pair(364, 499, 137, 'Teléfono de contacto:', 687, 110, '<i>[+56 9 1234 5678]</i>'), pair(390, 499, 99, 'Correo electrónico:', 642, 155, '<i>tatiana.nunez@gmail.com</i>'), rule(410, 475, 345),
  text(434, 499, 130, '<b>Configuración</b>', 'strong'), pair(456, 499, 186, 'Notificación de nuevos leads', 792, 6, '<i>›</i>'), pair(481, 499, 150, 'Cambiar la contraseña', 787, 11, '<i>◉</i>'), pair(507, 499, 102, 'Cerrar la cuenta', 787, 11, '<i>◉</i>'), rule(527, 470, 347),
  text(547, 499, 153, '<b>Plan Contratado</b>', 'strong'), pair(568, 499, 75, 'Plan actual:', 741, 56, '<i>Gratuito</i>'), pair(593, 499, 166, 'Leads disponibles este mes:', 749, 52, '<i>3 de 5</i>'), row(619, B(513, 128, 21, 'outline', 'Ver los planes', 530, 90), B(668, 124, 23, 'warn tag', 'Actualizar', 690, 76)), rule(634, 470, 347),
  plain(658, 529, 'Cerrar Sesión', 595, 124, 260, 32), rule(681, 470, 347));

/* Section: lower left */
origin = [420, 800];
screen(34, 167, {}, text(321, 146, 123, 'Iniciar <b>Ses</b><i>ión</i>', 'strong'),
  text(384, 71, 131, 'Correo Electrónico'), field(412, 69, 'tatiana.nunez@gmail.com', 178), text(438, 170, 168, '¿Olvidaste tu correo electrónico?'), text(467, 71, 81, 'Contraseña'), field(495, 69, '••••••••', 55), text(521, 210, 130, '¿Olvidaste tu contraseña?'),
  row(565, I(70, 28, 20, 'toggle'), T(101, 162, 'Recordarme en este dispositivo')), go(646, 71, 'Ingresar', 163, 76), text(733, 146, 116, 'O continuar con:'), row(777, B(69, 120, 43, 'field', ''), B(214, 124, 43, 'field', '')), row(777, I(78, 20, 22, 'google'), T(107, 74, 'Iniciar con Google'), I(230, 17, 20, 'apple'), T(257, 72, 'Iniciar con Apple')));
screen(528, 167, {}, row(320, I(550, 74, 62, 'tools')), text(309, 636, 196, '<b>¡Estamos preparando</b>', 'strong'), text(336, 640, 184, '<b>este espacio para</b> <i>ti</i><b>!</b>', 'strong'),
  [['Esta funcionalidad está en desarrollo y muy', 311, 390], ['pronto estará disponible.', 165, 408], ['Mientras, ya tu puedes ir a referirnos asegúrate', 311, 444]].map(([s, w, y]) => text(y, 547, w, s, 'wide', 5.2)), text(462, 547, 156, 'visitando <b class="strong">Seguro</b><i class="strong">Aquí</i>'), go(582, 565, 'Ir al Inicio', 660, 88));

/* Scale every label to the width it has on the board */
const labels = [...document.querySelectorAll('.text')];
labels.forEach(el => { el.style.width = 'max-content'; });
const natural = labels.map(el => el.getBoundingClientRect().width);
labels.forEach((el, i) => {
  const w = +el.dataset.w, size = Math.min(+el.dataset.max, 10 * w / natural[i]);
  const rest = w - natural[i] * size / 10, s = el.textContent;
  el.style.fontSize = size + 'px';
  el.style.width = w + 'px';
  if (el.classList.contains('wide')) el.style.wordSpacing = rest / (s.split(' ').length - 1 || 1) + 'px';
  else el.style.letterSpacing = rest / s.length + 'px';
});
```
